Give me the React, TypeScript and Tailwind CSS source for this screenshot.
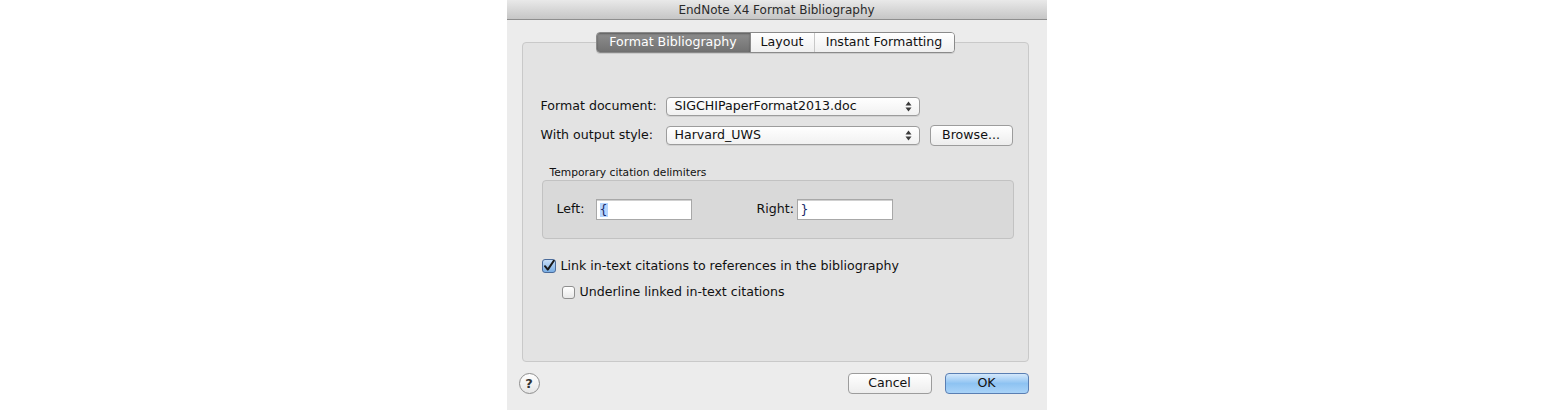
import React from "react";

const font = "font-['DejaVu_Sans',sans-serif]";

function Arrows() {
  return (
    <svg width="7" height="11" viewBox="0 0 7 11" className="shrink-0">
      <path d="M3.5 0.5 L6.5 4.5 L0.5 4.5 Z" fill="#3a3a3a" />
      <path d="M3.5 10.5 L6.5 6.5 L0.5 6.5 Z" fill="#3a3a3a" />
    </svg>
  );
}

function Popup({ value }: { value: string }) {
  return (
    <div className="h-[19px] w-[254px] flex items-center justify-between pl-[8px] pr-[7px] rounded-[4px] border border-[#9c9c9c] bg-gradient-to-b from-white to-[#f1f1f1] shadow-[0_1px_0_rgba(0,0,0,0.08)] text-[#111]">
      <span>{value}</span>
      <Arrows />
    </div>
  );
}

function PushButton({ label, width, primary }: { label: string; width: string; primary?: boolean }) {
  return (
    <div
      className={
        primary
          ? `${width} h-[21px] flex items-center justify-center rounded-[4px] border border-[#5a7fb3] bg-gradient-to-b from-[#d4e8fb] via-[#8ec3f2] to-[#a9d3f8] text-[#111]`
          : `${width} h-[21px] flex items-center justify-center rounded-[4px] border border-[#9c9c9c] bg-gradient-to-b from-white to-[#ededed] text-[#111]`
      }
    >
      {label}
    </div>
  );
}

function TextField({ value }: { value: string }) {
  return (
    <div className="w-[96px] h-[21px] bg-white border border-[#a8a8a8] shadow-[inset_0_1px_0_#d0d0d0] flex items-center pl-[3px] text-[#1a2a6a]">
      <span className={value === "{" ? "bg-[#b5d5ff] leading-[14px]" : "leading-[14px]"}>{value}</span>
    </div>
  );
}

export default function App() {
  return (
    <main className={`w-full h-[410px] bg-white flex justify-center ${font} text-[12.6px] text-[#111]`}>
      <div className="w-[540px] h-[410px] bg-[#ececec] flex flex-col">
        {/* title bar */}
        <div className="h-[20px] shrink-0 bg-gradient-to-b from-[#e9e9e9] to-[#c6c6c6] border-b border-[#8e8e8e] flex items-center justify-center text-[12px] text-[#2a2a2a]">
          EndNote X4 Format Bibliography
        </div>

        {/* tab box */}
        <div className="mt-[22px] ml-[15px] mr-[18px] h-[320px] rounded-[4px] border border-[#c9c9c9] bg-[#e3e3e3] flex flex-col pl-[18px] pr-[14px]">
          <div className="-mt-[11px] flex justify-center -ml-[18px] -mr-[14px]">
            <div className="h-[21px] flex rounded-[4px] border border-[#8a8a8a] overflow-hidden shadow-[0_1px_0_rgba(0,0,0,0.1)]">
              <div className="w-[153px] flex items-center justify-center bg-gradient-to-b from-[#8e8e8e] to-[#717171] text-white shadow-[inset_0_1px_2px_rgba(0,0,0,0.35)]">
                Format Bibliography
              </div>
              <div className="w-[64px] flex items-center justify-center bg-gradient-to-b from-white to-[#efefef] border-l border-[#8a8a8a]">
                Layout
              </div>
              <div className="w-[140px] flex items-center justify-center bg-gradient-to-b from-white to-[#efefef] border-l border-[#c8c8c8]">
                Instant Formatting
              </div>
            </div>
          </div>

          <div className="mt-[42px] h-[22px] flex items-center">
            <div className="w-[125px]">Format document:</div>
            <Popup value="SIGCHIPaperFormat2013.doc" />
          </div>
          <div className="mt-[7px] h-[22px] flex items-center">
            <div className="w-[125px]">With output style:</div>
            <Popup value="Harvard_UWS" />
            <div className="ml-[10px]">
              <PushButton label="Browse..." width="w-[83px]" />
            </div>
          </div>

          <div className="mt-[20px] ml-[9px] text-[10.7px] leading-[13px]">Temporary citation delimiters</div>
          <div className="mt-[1px] ml-[1px] h-[59px] rounded-[4px] border border-[#c2c2c2] bg-[#d9d9d9] flex items-center pl-[14px]">
            <div className="w-[39px]">Left:</div>
            <TextField value="{" />
            <div className="ml-[65px] w-[40px]">Right:</div>
            <TextField value="}" />
          </div>

          <div className="mt-[19px] ml-[1px] h-[16px] flex items-center gap-[5px]">
            <div className="w-[14px] h-[14px] rounded-[3px] border border-[#4a6b9a] bg-gradient-to-b from-[#c7def7] to-[#7aaee4] flex items-center justify-center">
              <svg width="12" height="12" viewBox="0 0 12 12">
                <path d="M2 6.2 L4.8 9.6 L10.8 0.8" fill="none" stroke="#1a1a1a" strokeWidth="2" strokeLinecap="round" strokeLinejoin="round" />
              </svg>
            </div>
            <span>Link in-text citations to references in the bibliography</span>
          </div>
          <div className="mt-[10px] ml-[21px] h-[16px] flex items-center gap-[5px]">
            <div className="w-[13px] h-[13px] rounded-[3px] border border-[#8f8f8f] bg-gradient-to-b from-white to-[#e8e8e8]" />
            <span>Underline linked in-text citations</span>
          </div>
        </div>

        {/* bottom buttons */}
        <div className="mt-[11px] ml-[12px] mr-[18px] flex items-center">
          <div className="w-[21px] h-[21px] rounded-full border border-[#8e8e8e] bg-gradient-to-b from-white to-[#e6e6e6] flex items-center justify-center font-bold text-[13px] text-[#333]">
            ?
          </div>
          <div className="flex-1" />
          <PushButton label="Cancel" width="w-[84px]" />
          <div className="ml-[13px]">
            <PushButton label="OK" width="w-[84px]" primary />
          </div>
        </div>
      </div>
    </main>
  );
}
